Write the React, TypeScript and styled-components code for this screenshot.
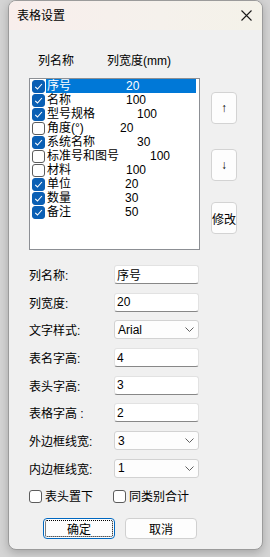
import styled, { createGlobalStyle } from "styled-components";

const GlobalStyle = createGlobalStyle`
  html, body {
    margin: 0;
    padding: 0;
    background: #d4d4d4;
    height: 557px;
    overflow: hidden;
  }
  body {
    font-family: "Liberation Sans", "Noto Sans CJK SC", sans-serif;
    font-size: 12px;
    color: #000;
  }
  * { box-sizing: border-box; }
`;

type Column = { name: string; width: string; at: number; checked: boolean };

const columns: Column[] = [
  { name: "序号", width: "20", at: 79, checked: true },
  { name: "名称", width: "100", at: 79, checked: true },
  { name: "型号规格", width: "100", at: 90, checked: true },
  { name: "角度(°)", width: "20", at: 73, checked: false },
  { name: "系统名称", width: "30", at: 90, checked: true },
  { name: "标准号和图号", width: "100", at: 103, checked: false },
  { name: "材料", width: "100", at: 79, checked: false },
  { name: "单位", width: "20", at: 78, checked: true },
  { name: "数量", width: "30", at: 78, checked: true },
  { name: "备注", width: "50", at: 78, checked: true },
];

export default function App() {
  return (
    <>
      <GlobalStyle />
      <Window>
        <TitleBar>
          <Title>表格设置</Title>
          <CloseButton>
            <svg width="11" height="11" viewBox="0 0 11 11">
              <path d="M0.5 0.5 L10.5 10.5 M10.5 0.5 L0.5 10.5" stroke="#1a1a1a" strokeWidth="1.1" />
            </svg>
          </CloseButton>
        </TitleBar>
        <Body>
          <ListHeader>
            <span>列名称</span>
            <span>列宽度(mm)</span>
          </ListHeader>
          <ListArea>
            <ListBox>
              {columns.map((c, i) => (
                <ListRow key={c.name}>
                  <CheckBox $checked={c.checked}>
                    {c.checked && (
                      <svg width="9" height="9" viewBox="0 0 9 9">
                        <path d="M1.2 4.8 L3.5 7 L7.9 2" stroke="#fff" strokeWidth="1.1" fill="none" />
                      </svg>
                    )}
                  </CheckBox>
                  <RowText $selected={i === 0} $at={c.at}>
                    <span>{c.name}</span>
                    <span>{c.width}</span>
                  </RowText>
                </ListRow>
              ))}
            </ListBox>
            <SideButtons>
              <SideButton $top={0}>↑</SideButton>
              <SideButton $top={25}>↓</SideButton>
              <SideButton $top={21}>修改</SideButton>
            </SideButtons>
          </ListArea>
          <Form>
            <FormRow>
              <FieldLabel>列名称:</FieldLabel>
              <TextInput defaultValue="序号" />
            </FormRow>
            <FormRow>
              <FieldLabel>列宽度:</FieldLabel>
              <TextInput defaultValue="20" />
            </FormRow>
            <FormRow>
              <FieldLabel>文字样式:</FieldLabel>
              <Combo>
                <span>Arial</span>
                <Chevron />
              </Combo>
            </FormRow>
            <FormRow>
              <FieldLabel>表名字高:</FieldLabel>
              <TextInput defaultValue="4" />
            </FormRow>
            <FormRow>
              <FieldLabel>表头字高:</FieldLabel>
              <TextInput defaultValue="3" />
            </FormRow>
            <FormRow>
              <FieldLabel>表格字高 :</FieldLabel>
              <TextInput defaultValue="2" />
            </FormRow>
            <FormRow>
              <FieldLabel>外边框线宽:</FieldLabel>
              <Combo>
                <span>3</span>
                <Chevron />
              </Combo>
            </FormRow>
            <FormRow>
              <FieldLabel>内边框线宽:</FieldLabel>
              <Combo>
                <span>1</span>
                <Chevron />
              </Combo>
            </FormRow>
          </Form>
          <Options>
            <Option>
              <CheckBox $checked={false} />
              <span>表头置下</span>
            </Option>
            <Option>
              <CheckBox $checked={false} />
              <span>同类别合计</span>
            </Option>
          </Options>
          <Actions>
            <ActionButton $primary>确定</ActionButton>
            <ActionButton>取消</ActionButton>
          </Actions>
        </Body>
      </Window>
    </>
  );
}

function Chevron() {
  return (
    <svg width="9" height="5" viewBox="0 0 9 5">
      <path d="M0.5 0.5 L4.5 4.5 L8.5 0.5" stroke="#606060" strokeWidth="1" fill="none" />
    </svg>
  );
}

const Window = styled.div`
  margin-left: 8px;
  width: 255px;
  height: 550px;
  border: 1px solid #9b9b9b;
  border-radius: 8px;
  overflow: hidden;
  background: #f0f0f0;
  display: flex;
  flex-direction: column;
  box-shadow: 0 3px 10px rgba(0, 0, 0, 0.22);
`;

const TitleBar = styled.div`
  height: 29px;
  flex: none;
  display: flex;
  align-items: center;
  justify-content: space-between;
  padding-left: 8px;
  background: linear-gradient(90deg, #f8eeec 0%, #f5f1ec 60%, #f4f2e9 100%);
`;

const Title = styled.div`
  font-size: 12px;
  line-height: 14px;
`;

const CloseButton = styled.div`
  width: 30px;
  height: 29px;
  display: flex;
  align-items: center;
  justify-content: center;
  padding-right: 2px;
`;

const Body = styled.div`
  padding-left: 20px;
  display: flex;
  flex-direction: column;
`;

const ListHeader = styled.div`
  margin-top: 24px;
  padding-left: 9px;
  display: grid;
  grid-template-columns: 69px auto;
  line-height: 14px;
`;

const ListArea = styled.div`
  margin-top: 10px;
  display: flex;
  gap: 11px;
`;

const ListBox = styled.div`
  width: 171px;
  height: 172px;
  background: #fff;
  border: 1px solid #8c8f94;
  padding: 0 3px 0 2px;
`;

const ListRow = styled.div`
  height: 14px;
  display: flex;
  align-items: center;
`;

const CheckBox = styled.div<{ $checked: boolean }>`
  flex: none;
  width: 13px;
  height: 13px;
  border-radius: 3px;
  display: flex;
  align-items: center;
  justify-content: center;
  background: ${(p) => (p.$checked ? "#0a5fb4" : "#fff")};
  border: 1px solid ${(p) => (p.$checked ? "#0a5fb4" : "#5c5c5c")};
`;

const RowText = styled.div<{ $selected: boolean; $at: number }>`
  flex: 1;
  margin-left: 1px;
  height: 14px;
  line-height: 14px;
  padding-left: 1px;
  display: grid;
  grid-template-columns: ${(p) => p.$at}px auto;
  white-space: nowrap;
  background: ${(p) => (p.$selected ? "#0078d7" : "transparent")};
  color: ${(p) => (p.$selected ? "#fff" : "#000")};
`;

const SideButtons = styled.div`
  padding-top: 14px;
  display: flex;
  flex-direction: column;
`;

const SideButton = styled.div<{ $top: number }>`
  margin-top: ${(p) => p.$top}px;
  width: 26px;
  height: 32px;
  border: 1px solid #d3d3d3;
  border-radius: 4px;
  background: #fdfdfd;
  display: flex;
  align-items: center;
  justify-content: center;
  white-space: nowrap;
  font-size: 12px;
`;

const Form = styled.div`
  margin-top: 15px;
  display: flex;
  flex-direction: column;
  gap: 8.7px;
`;

const FormRow = styled.div`
  height: 19px;
  display: flex;
  align-items: center;
`;

const FieldLabel = styled.div`
  width: 85px;
  white-space: nowrap;
`;

const TextInput = styled.input`
  width: 85px;
  height: 19px;
  border: 1px solid #e2e2e2;
  border-bottom-color: #878787;
  border-radius: 3px;
  background: #fff;
  padding: 0 2px;
  font: inherit;
  color: #000;
  outline: none;
`;

const Combo = styled.div`
  width: 85px;
  height: 19px;
  border: 1px solid #d2d2d2;
  border-radius: 3px;
  background: #fdfdfd;
  padding: 0 4px 0 3px;
  display: flex;
  align-items: center;
  justify-content: space-between;
`;

const Options = styled.div`
  margin-top: 12px;
  display: grid;
  grid-template-columns: 84px auto;
  line-height: 14px;
`;

const Option = styled.div`
  display: flex;
  align-items: center;
  gap: 3px;
`;

const Actions = styled.div`
  margin-top: 14px;
  padding-left: 14px;
  display: flex;
  gap: 10px;
`;

const ActionButton = styled.div<{ $primary?: boolean }>`
  position: relative;
  width: 72px;
  height: 21px;
  border-radius: 4px;
  border: 1px solid ${(p) => (p.$primary ? "#0067c0" : "#d0d0d0")};
  background: #fdfdfd;
  display: flex;
  align-items: center;
  justify-content: center;
  outline: ${(p) => (p.$primary ? "1px dotted #000" : "none")};
  outline-offset: -3px;
`;
